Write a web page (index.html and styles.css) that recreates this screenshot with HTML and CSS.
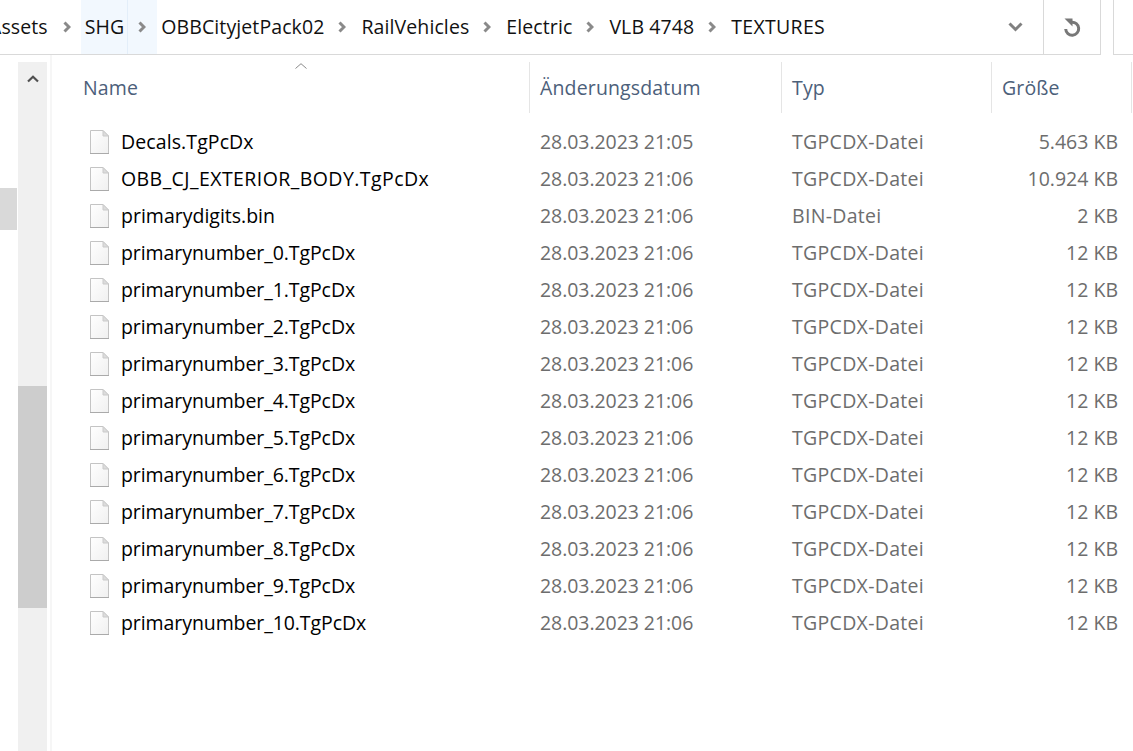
FILE: index.html
```html
<!DOCTYPE html>
<html lang="de">
<head>
<meta charset="utf-8">
<title>TEXTURES</title>
<link rel="stylesheet" href="styles.css">
</head>
<body>
<svg class="defs" width="0" height="0" aria-hidden="true">
  <defs>
    <linearGradient id="pg" x1="0" y1="0" x2="1" y2="1"><stop offset="0" stop-color="#ffffff"/><stop offset="1" stop-color="#f0f0f0"/></linearGradient>
    <symbol id="file" viewBox="0 0 19 24">
      <path d="M.5.5H13L18.5 6V23.5H.5Z" fill="url(#pg)" stroke="#c4c4c4"/>
      <path d="M13 .5V6H18.5Z" fill="#dcdcdc" stroke="#cacaca"/>
      <path d="M0 23.5H19" stroke="#aaaaaa"/>
    </symbol>
    <symbol id="chev" viewBox="0 0 8 12">
      <path d="M1.5 1.5 6 6 1.5 10.5" fill="none" stroke="#8a8a8a" stroke-width="3"/>
    </symbol>
  </defs>
</svg>
<div class="window">
  <header class="top">
    <div class="address">
      <nav class="crumbs">
        <span class="crumb">Assets</span><svg class="sep"><use href="#chev" x="11" y="8" width="8" height="12"/></svg>
        <span class="hot"><span class="crumb">SHG</span><svg class="sep"><use href="#chev" x="10" y="8" width="8" height="12"/></svg></span>
        <span class="crumb">OBBCityjetPack02</span><svg class="sep"><use href="#chev" x="10" y="8" width="8" height="12"/></svg>
        <span class="crumb">RailVehicles</span><svg class="sep"><use href="#chev" x="10" y="8" width="8" height="12"/></svg>
        <span class="crumb">Electric</span><svg class="sep"><use href="#chev" x="10" y="8" width="8" height="12"/></svg>
        <span class="crumb">VLB 4748</span><svg class="sep"><use href="#chev" x="10" y="8" width="8" height="12"/></svg>
        <span class="crumb caps">TEXTURES</span>
      </nav>
      <div class="drop">
        <svg width="15" height="10" viewBox="0 0 15 10"><path d="M1.5 1.5 7.5 7.5 13.5 1.5" fill="none" stroke="#808080" stroke-width="3"/></svg>
      </div>
      <div class="refresh">
        <svg width="18" height="19" viewBox="0 0 18 19"><path d="M8.5 4.2A6.5 6.5 0 1 1 2.7 11" fill="none" stroke="#787878" stroke-width="3"/><path d="M1.5 .5H9.5V8.5Z" fill="#787878"/></svg>
      </div>
    </div>
    <div class="search"></div>
  </header>
  <div class="main">
    <aside class="nav"><div class="nav-sel"></div></aside>
    <div class="scroll">
      <svg class="scroll-up" width="12" height="8" viewBox="0 0 12 8"><path d="M1 6.5 6 1.8 11 6.5" fill="none" stroke="#505050" stroke-width="2.2"/></svg>
      <div class="thumb"></div>
    </div>
    <section class="pane">
      <div class="head">
        <svg class="sort" width="12" height="6" viewBox="0 0 12 6"><path d="M.5 5.5 6 .7 11.5 5.5" fill="none" stroke="#8a8a8a"/></svg>
        <div class="hcell">Name</div>
        <div class="hcell">Änderungsdatum</div>
        <div class="hcell">Typ</div>
        <div class="hcell">Größe</div>
      </div>
      <div class="rows">
        <div class="row"><div class="name"><svg class="ficon"><use href="#file"/></svg><span class="mix">Decals.TgPcDx</span></div><div class="cell date">28.03.2023 21:05</div><div class="cell type">TGPCDX-Datei</div><div class="cell size">5.463 KB</div></div>
        <div class="row"><div class="name"><svg class="ficon"><use href="#file"/></svg><span class="upper">OBB_CJ_EXTERIOR_BODY.TgPcDx</span></div><div class="cell date">28.03.2023 21:06</div><div class="cell type">TGPCDX-Datei</div><div class="cell size">10.924 KB</div></div>
        <div class="row"><div class="name"><svg class="ficon"><use href="#file"/></svg><span class="digits">primarydigits.bin</span></div><div class="cell date">28.03.2023 21:06</div><div class="cell type">BIN-Datei</div><div class="cell size">2 KB</div></div>
        <div class="row"><div class="name"><svg class="ficon"><use href="#file"/></svg><span class="low">primarynumber_0.TgPcDx</span></div><div class="cell date">28.03.2023 21:06</div><div class="cell type">TGPCDX-Datei</div><div class="cell size">12 KB</div></div>
        <div class="row"><div class="name"><svg class="ficon"><use href="#file"/></svg><span class="low">primarynumber_1.TgPcDx</span></div><div class="cell date">28.03.2023 21:06</div><div class="cell type">TGPCDX-Datei</div><div class="cell size">12 KB</div></div>
        <div class="row"><div class="name"><svg class="ficon"><use href="#file"/></svg><span class="low">primarynumber_2.TgPcDx</span></div><div class="cell date">28.03.2023 21:06</div><div class="cell type">TGPCDX-Datei</div><div class="cell size">12 KB</div></div>
        <div class="row"><div class="name"><svg class="ficon"><use href="#file"/></svg><span class="low">primarynumber_3.TgPcDx</span></div><div class="cell date">28.03.2023 21:06</div><div class="cell type">TGPCDX-Datei</div><div class="cell size">12 KB</div></div>
        <div class="row"><div class="name"><svg class="ficon"><use href="#file"/></svg><span class="low">primarynumber_4.TgPcDx</span></div><div class="cell date">28.03.2023 21:06</div><div class="cell type">TGPCDX-Datei</div><div class="cell size">12 KB</div></div>
        <div class="row"><div class="name"><svg class="ficon"><use href="#file"/></svg><span class="low">primarynumber_5.TgPcDx</span></div><div class="cell date">28.03.2023 21:06</div><div class="cell type">TGPCDX-Datei</div><div class="cell size">12 KB</div></div>
        <div class="row"><div class="name"><svg class="ficon"><use href="#file"/></svg><span class="low">primarynumber_6.TgPcDx</span></div><div class="cell date">28.03.2023 21:06</div><div class="cell type">TGPCDX-Datei</div><div class="cell size">12 KB</div></div>
        <div class="row"><div class="name"><svg class="ficon"><use href="#file"/></svg><span class="low">primarynumber_7.TgPcDx</span></div><div class="cell date">28.03.2023 21:06</div><div class="cell type">TGPCDX-Datei</div><div class="cell size">12 KB</div></div>
        <div class="row"><div class="name"><svg class="ficon"><use href="#file"/></svg><span class="low">primarynumber_8.TgPcDx</span></div><div class="cell date">28.03.2023 21:06</div><div class="cell type">TGPCDX-Datei</div><div class="cell size">12 KB</div></div>
        <div class="row"><div class="name"><svg class="ficon"><use href="#file"/></svg><span class="low">primarynumber_9.TgPcDx</span></div><div class="cell date">28.03.2023 21:06</div><div class="cell type">TGPCDX-Datei</div><div class="cell size">12 KB</div></div>
        <div class="row"><div class="name"><svg class="ficon"><use href="#file"/></svg><span class="low">primarynumber_10.TgPcDx</span></div><div class="cell date">28.03.2023 21:06</div><div class="cell type">TGPCDX-Datei</div><div class="cell size">12 KB</div></div>
      </div>
    </section>
  </div>
</div>
</body>
</html>
```
FILE: styles.css
```css
html, body { margin: 0; padding: 0; background: #fff; }
body { font-family: "Open Sans", "Noto Sans", sans-serif; font-size: 19.5px; color: #000; overflow: hidden; }
.defs { display: block; height: 0; }
.window { width: 1133px; height: 751px; display: flex; flex-direction: column; overflow: hidden; }

.top { display: flex; height: 55px; flex: none; }
.address { width: 1101px; flex: none; display: flex; box-sizing: border-box; border-right: 1px solid #d9d9d9; border-bottom: 1px solid #d9d9d9; overflow: hidden; }
.search { margin-left: 12px; flex: 1; border-left: 1px solid #d9d9d9; border-bottom: 1px solid #d9d9d9; }
.crumbs { flex: 1; display: flex; align-items: center; margin-left: -15px; color: #111; white-space: nowrap; overflow: hidden; height: 54px; min-width: 0; letter-spacing: .1px; }
.crumb { padding: 0 4px; line-height: 54px; }
.caps { letter-spacing: .3px; }
.sep { width: 29px; height: 28px; flex: none; }
.hot { display: flex; align-items: center; height: 54px; background: #f2f8fe; }
.hot .crumb { padding-right: 3px; border-right: 1px solid #e3eef9; }
.drop { width: 56px; flex: none; display: flex; align-items: center; justify-content: center; }
.refresh { width: 56px; flex: none; border-left: 1px solid #d9d9d9; display: flex; align-items: center; justify-content: center; }

.main { flex: 1; display: flex; min-height: 0; }
.nav { width: 18px; flex: none; }
.nav-sel { width: 17px; height: 42px; margin-top: 133px; background: #d9d9d9; }
.scroll { width: 29px; flex: none; margin-top: 7px; background: #f0f0f0; display: flex; flex-direction: column; align-items: center; }
.scroll-up { margin-top: 13px; flex: none; }
.thumb { width: 100%; height: 222px; margin-top: 303px; background: #cdcdcd; flex: none; }

.pane { flex: 1; margin-left: 3px; border-left: 2px solid #f6f6f6; min-width: 0; }
.head { display: grid; grid-template-columns: 478px 252px 210px 140px; height: 48px; margin-top: 7px; position: relative; letter-spacing: .15px; }
.sort { position: absolute; left: 243px; top: 1px; }
.hcell { color: #4c607a; padding-left: 10px; line-height: 51px; border-right: 1px solid #e5e5e5; }
.hcell:first-of-type { padding-left: 31px; }
.rows { padding-top: 13px; }
.row { display: grid; grid-template-columns: 477px 252px 210px 127px; height: 37px; align-items: center; }
.name { display: flex; align-items: center; padding-left: 38px; white-space: nowrap; }
.ficon { width: 19px; height: 24px; margin-right: 12px; flex: none; }
.low { letter-spacing: -.08px; }
.digits { letter-spacing: 0; }
.mix { letter-spacing: .1px; }
.upper { letter-spacing: .43px; }
.cell { color: #6d6d6d; padding-left: 11px; white-space: nowrap; }
.date { letter-spacing: -.06px; }
.type { letter-spacing: .3px; }
.size { padding-left: 0; text-align: right; }
```
